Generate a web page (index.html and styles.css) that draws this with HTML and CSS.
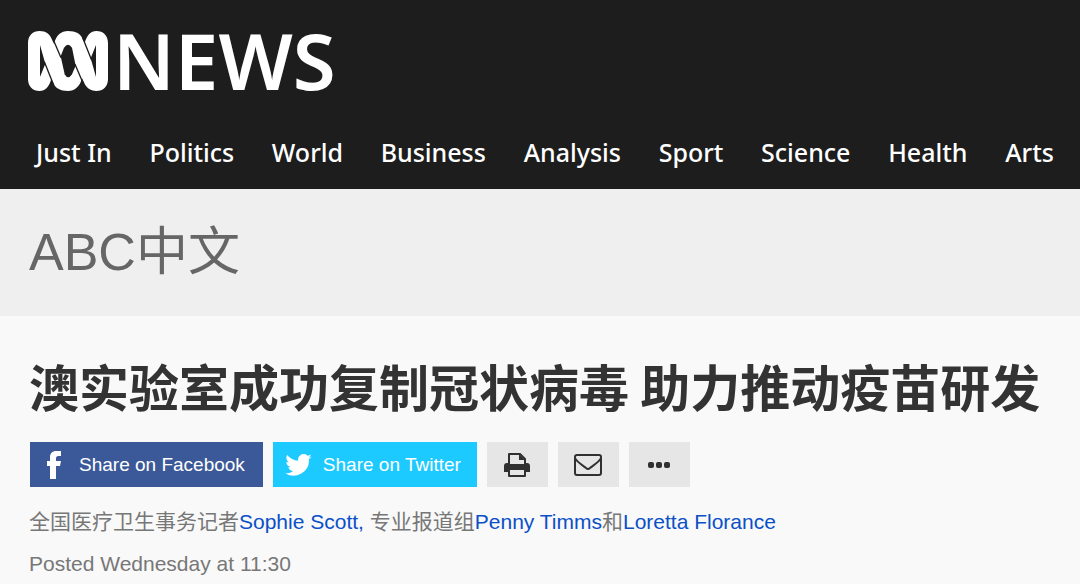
FILE: index.html
```html
<!DOCTYPE html>
<html lang="zh-CN">
<head>
	<meta charset="utf-8">
	<meta name="viewport" content="width=device-width, initial-scale=1">
	<title>ABC中文 - ABC News</title>
	<link rel="stylesheet" href="styles.css">
</head>

<body>
<header class="header">
	<a class="logo" href="#">
		<svg class="logo-mark" viewBox="0 0 240 180" aria-hidden="true">
			<path fill="#fff" d="M0 36C0 14 14 0 35 0C54 0 66 10 72 26L78 38C85 12 100 0 120 0C144 0 158 8 165 26L170 36C177 12 188 0 205 0C226 0 240 14 240 36V144C240 166 226 180 205 180C186 180 174 170 168 154L162 142C155 168 140 180 120 180C96 180 82 172 75 154L70 144C63 168 52 180 35 180C14 180 0 166 0 144Z"/>
			<g fill="#1d1d1d">
				<path d="M36 42L52 98L36 138zM204 138L188 82L204 42z"/>
				<path d="M98 76L108 50Q120 32 132 50L143 104L132 130Q120 148 110 130z"/>
			</g>
			<path fill="none" stroke="#1d1d1d" stroke-width="4" d="M49 92L76 160M191 88L164 20M99 80L74 22M141 100L166 158"/>
		</svg>
		<span class="logo-text">NEWS</span>
	</a>
	<nav>
	<ul class="nav">
		<li><a href="#">Just In</a></li>
		<li><a href="#">Politics</a></li>
		<li><a href="#">World</a></li>
		<li><a href="#">Business</a></li>
		<li><a href="#">Analysis</a></li>
		<li><a href="#">Sport</a></li>
		<li><a href="#">Science</a></li>
		<li><a href="#">Health</a></li>
		<li><a href="#">Arts</a></li>
	</ul>
	</nav>
</header>

<div class="section-title">ABC中文</div>

<main class="article">
	<h1>澳实验室成功复制冠状病毒 助力推动疫苗研发</h1>

	<div class="share">
		<button class="share-button facebook" type="button">
			<svg width="14" height="28" viewBox="0 0 14 28" aria-hidden="true"><path fill="#fff" d="M14 0v5h-3c-1 0-2 1-2 2v3h5l-1 5H9v13H3V15H0v-5h3V6c0-4 3-6 6-6z"/></svg>
			<span>Share on Facebook</span>
		</button>
		<button class="share-button twitter" type="button">
			<svg width="27" height="22" viewBox="0 0 24 20" aria-hidden="true"><path fill="#fff" d="M24 2.400a9.800 9.800 0 0 1-2.800.8A4.900 4.900 0 0 0 23.300.5a9.900 9.900 0 0 1-3.100 1.200 4.900 4.900 0 0 0-8.400 4.500A14 14 0 0 1 1.700 1a4.900 4.900 0 0 0 1.500 6.600A4.900 4.900 0 0 1 1 7v.1a4.900 4.900 0 0 0 3.900 4.800 4.900 4.900 0 0 1-2.200.1 4.900 4.900 0 0 0 4.600 3.400A9.900 9.900 0 0 1 0 17.500a14 14 0 0 0 21.500-12.400v-.6A10 10 0 0 0 24 2.400z"/></svg>
			<span>Share on Twitter</span>
		</button>
		<button class="share-button icon" type="button" aria-label="Print">
			<svg width="26" height="24" viewBox="0 0 26 24" aria-hidden="true"><path fill="#303030" d="M3 10h20c2 0 3 1 3 3v6h-5v-2H5v2H0v-6c0-2 1-3 3-3z"/><path fill="#e6e6e6" stroke="#303030" stroke-width="2" stroke-linejoin="round" d="M5 12V1h11l5 5v6zM5 16h16v7H5z"/><path fill="#303030" d="M15 1l6 6h-6zM4 11h18v6H4z"/></svg>
		</button>
		<button class="share-button icon" type="button" aria-label="Email">
			<svg width="28" height="22" viewBox="0 0 28 22" aria-hidden="true"><g fill="none" stroke="#303030" stroke-width="2"><rect x="1" y="1" width="26" height="20" rx="2"/><path d="M1 4c1 3 7 7 11 10q2 2 4 0c4-3 10-7 11-10"/></g></svg>
		</button>
		<button class="share-button icon" type="button" aria-label="More">
			<svg width="22" height="6" viewBox="0 0 22 6" aria-hidden="true"><g fill="#303030"><rect width="6" height="6" rx="2"/><rect x="8" width="6" height="6" rx="2"/><rect x="16" width="6" height="6" rx="2"/></g></svg>
		</button>
	</div>

	<p class="byline">全国医疗卫生事务记者<a href="#">Sophie Scott,</a> 专业报道组<a href="#">Penny Timms</a>和<a href="#">Loretta Florance</a></p>
	<p class="posted">Posted Wednesday at 11:30</p>
</main>
</body>
</html>
```
FILE: styles.css
```css
body{margin:0;background-color:#f9f9f9;color:#777;font-family:"Liberation Sans","Noto Sans CJK SC",sans-serif;}
a{text-decoration:none;}

.header{background-color:#1d1d1d;padding:20px 26px 16px 28px;}
.logo{display:flex;align-items:center;gap:5px;height:82px;color:#fff;}
.logo-mark{width:80px;height:60px;}
.logo-text{font-family:"Noto Sans",sans-serif;font-size:78px;line-height:78px;padding-bottom:2px;font-weight:600;}

.nav{display:flex;justify-content:space-between;list-style:none;margin:30px 0 0;padding:0 0 0 8px;}
.nav a{display:block;color:#fff;font-family:"Noto Sans",sans-serif;font-size:25px;line-height:41px;font-weight:500;white-space:nowrap;}

.section-title{background-color:#efefef;color:#666;font-size:52px;line-height:75px;padding:26px 29px;}

.article{padding:28px 29px 0;}
.article h1{margin:0;color:#333;font-size:50px;line-height:82px;font-weight:bold;font-family:"Noto Sans CJK SC",sans-serif;}

.share{display:flex;gap:10px;margin-top:16px;padding-left:1px;}
.share-button{display:flex;align-items:center;height:45px;border:0;padding:0 18px 0 17px;color:#fff;font-family:inherit;font-size:19px;cursor:pointer;}
.facebook{background-color:#3b5998;gap:18px;}
.twitter{background-color:#1dcaff;gap:11px;padding:0 16px 0 12px;}
.icon{background-color:#e6e6e6;justify-content:center;width:61px;padding:0;}

.byline{margin:20px 0 0;font-size:21px;line-height:30px;}
.byline a{color:#0a50c8;}
.posted{margin:12px 0 0;font-size:21px;line-height:30px;}
```
